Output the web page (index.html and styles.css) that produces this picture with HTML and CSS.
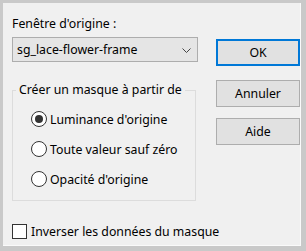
FILE: index.html
```html
<!DOCTYPE html>
<html lang="fr">
<head>
    <meta charset="UTF-8">
    <title>Masque à partir d'image</title>
    <link rel="stylesheet" href="styles.css">
</head>
<body>

<div class="dialog">
    <div class="left">
        <label class="field-label" for="source">Fenêtre d'origine :</label>
        <div class="combo" id="source">
            <span>sg_lace-flower-frame</span>
            <svg class="chevron" width="9" height="5" viewBox="0 0 9 5">
                <polyline points="0.5,0.5 4.5,4.5 8.5,0.5" fill="none" stroke="#444" stroke-width="1"/>
            </svg>
        </div>

        <fieldset class="group">
            <legend>Créer un masque à partir de</legend>
            <label class="opt"><input type="radio" name="mode" checked><span>Luminance d'origine</span></label>
            <label class="opt"><input type="radio" name="mode"><span>Toute valeur sauf zéro</span></label>
            <label class="opt"><input type="radio" name="mode"><span>Opacité d'origine</span></label>
        </fieldset>

        <label class="check"><input type="checkbox"><span>Inverser les données du masque</span></label>
    </div>

    <div class="buttons">
        <button class="btn default">OK</button>
        <button class="btn">Annuler</button>
        <button class="btn">Aide</button>
    </div>
</div>

</body>
</html>
```

FILE: styles.css
```css
body {
    margin: 0;
    background: #c9c9c9;
    font-family: 'Noto Sans', 'Open Sans', sans-serif;
    font-size: 12.3px;
    color: #000;
}
.dialog {
    box-sizing: border-box;
    width: 298px;
    height: 243px;
    margin: 3px 5px 5px 3px;
    padding: 13px 0 0 9px;
    background: #f0f0f0;
    border-right: 1px solid #fafafa;
    border-bottom: 1px solid #fafafa;
    display: flex;
    gap: 18px;
}
.left {
    width: 186px;
    flex: none;
    display: flex;
    flex-direction: column;
    white-space: nowrap;
}
.field-label {
    line-height: 16px;
}
.combo {
    box-sizing: border-box;
    height: 25px;
    margin-top: 5px;
    padding: 0 6px 0 4px;
    background: #e5e5e5;
    border: 1px solid #adadad;
    display: flex;
    align-items: center;
    justify-content: space-between;
}
.chevron {
    margin-top: 1px;
}
.group {
    width: 184px;
    box-sizing: border-box;
    margin: 20px 0 0 0;
    padding: 6px 0 6px 0;
    border: 1px solid #dcdcdc;
    min-width: 0;
}
.group legend {
    padding: 0 3px;
    margin-left: 3px;
    line-height: 16px;
    white-space: nowrap;
}
.opt {
    height: 30px;
    padding-left: 18px;
    display: flex;
    align-items: center;
}
.opt input {
    appearance: none;
    flex: none;
    box-sizing: border-box;
    width: 16px;
    height: 16px;
    margin: 0 3px 0 0;
    border: 1px solid #333;
    border-radius: 50%;
    background: #fff;
    display: flex;
    align-items: center;
    justify-content: center;
}
.opt input:checked::after {
    content: '';
    width: 8px;
    height: 8px;
    border-radius: 50%;
    background: #333;
}
.check {
    margin-top: 22px;
    height: 16px;
    display: flex;
    align-items: center;
}
.check input {
    appearance: none;
    flex: none;
    box-sizing: border-box;
    width: 15px;
    height: 15px;
    margin: 0 4px 0 0;
    border: 1px solid #333;
    background: #fff;
}
.buttons {
    display: flex;
    flex-direction: column;
    padding-top: 23px;
}
.btn {
    box-sizing: border-box;
    width: 84px;
    height: 27px;
    padding: 0;
    background: #e1e1e1;
    border: 1px solid #adadad;
    font-family: inherit;
    font-size: 12.3px;
    color: #000;
}
.btn.default {
    border: 2px solid #0078d7;
    margin-bottom: 14px;
}
.btn + .btn + .btn {
    margin-top: 11px;
}
```
